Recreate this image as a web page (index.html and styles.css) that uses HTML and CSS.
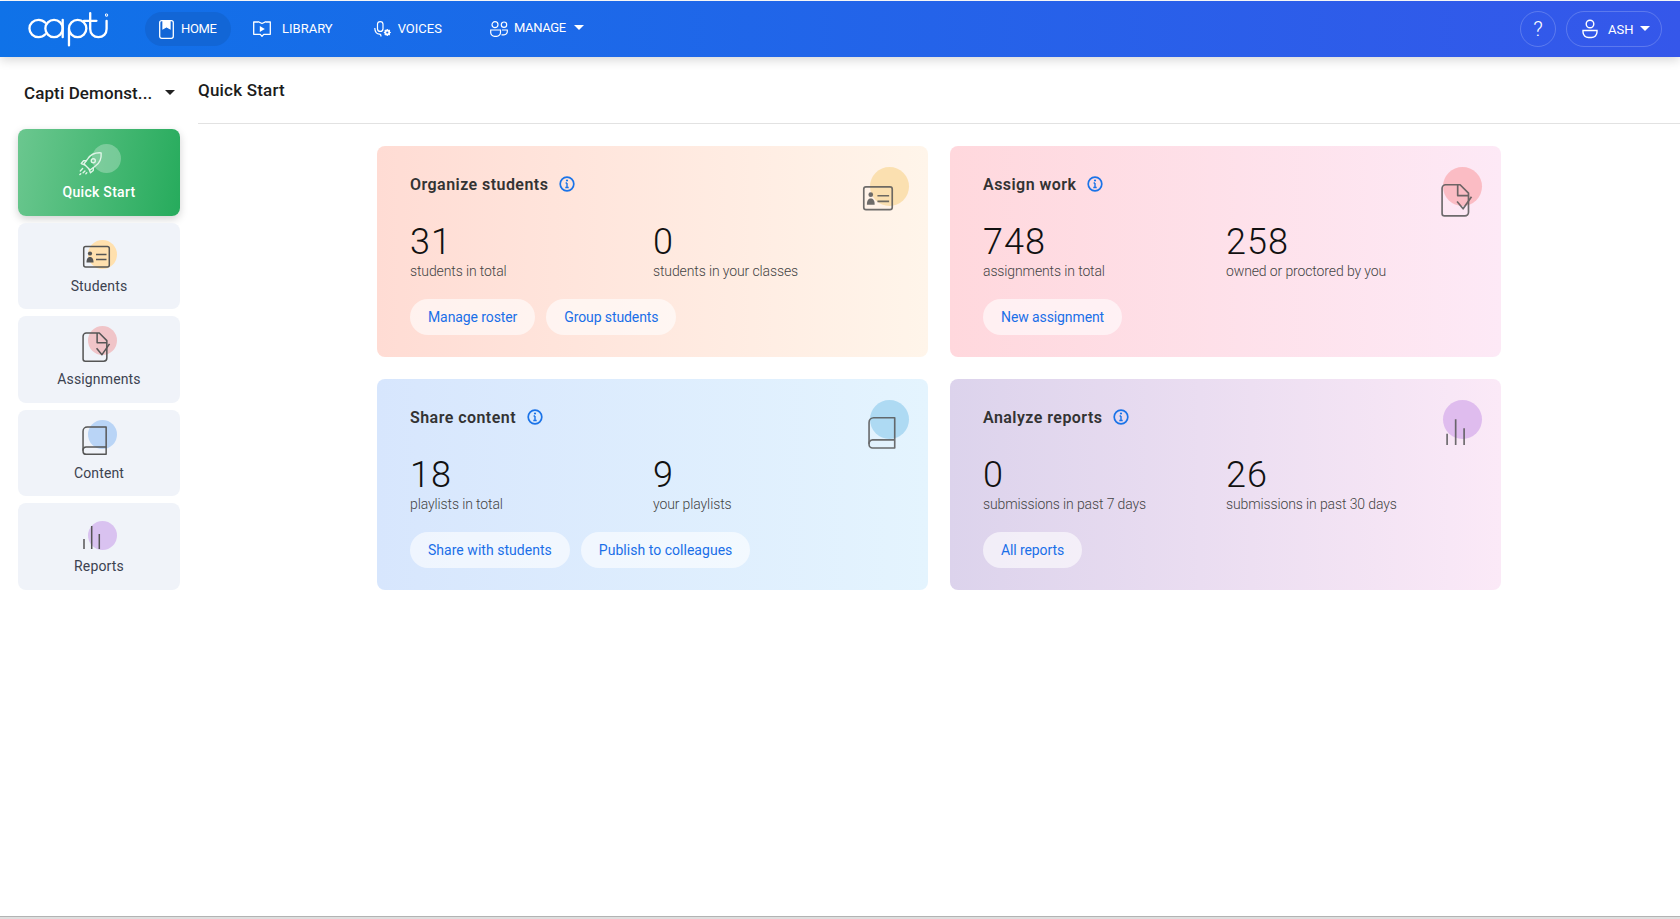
FILE: index.html
```html
<!DOCTYPE html>
<html lang="en">
<head>
<meta charset="utf-8">
<title>Capti - Quick Start</title>
<link rel="stylesheet" href="styles.css">
</head>
<body>
<div class="page">
  <header class="topbar">
    <svg class="logo" viewBox="0 0 84 36" fill="none" stroke="#fff" stroke-width="2.4" stroke-linecap="round">
      <path d="M18 11.500C16 9.500 13.500 8.500 11 8.500 5.500 8.500 1.500 12.500 1.500 17.500s4 9 9.500 9c2.500 0 5-1 7-3"/>
      <circle cx="27" cy="17.500" r="9"/>
      <path d="M36 8.500V26.500"/>
      <path d="M42.500 17.500a9 9 0 1 1 9 9 9 9 0 0 1-9-9zM42.500 17.500V35"/>
      <path d="M64.500 1.500V18c0 5 3.500 8.500 8.500 8.500s8.500-3.500 8.500-8.500V9.500M58 9.500H71"/>
      <circle cx="81.500" cy="3.500" r=".5"/>
    </svg>
    <nav class="mainnav">
      <a class="navitem navitem-active">
        <svg class="icon-home" viewBox="0 0 15 19" fill="none" stroke="#fff" stroke-width="1.300"><rect x=".7" y=".7" width="13.600" height="17.600" rx="2"/><path d="M4 .7h7v8L7.500 6.700 4 8.700z" fill="#fff"/></svg>
        <span class="text-tight">HOME</span>
      </a>
      <a class="navitem navitem-library">
        <svg class="icon-nav" viewBox="0 0 18 16" fill="none" stroke="#fff" stroke-width="1.300" stroke-linejoin="round"><path d="M5 1H.7V13.300H7.300L9 15.300l1.700-2H17.300V1H13"/><path d="M5 .7L9 2.500 13 .7"/><path d="M6.800 5l5 3-5 3z" fill="#fff" stroke="none"/></svg>
        <span>LIBRARY</span>
      </a>
      <a class="navitem navitem-voices">
        <svg class="icon-nav" viewBox="0 0 18 16" fill="none" stroke="#fff" stroke-width="1.200"><rect x="3.500" y=".6" width="5.500" height="9.800" rx="2.750"/><path d="M.8 7c0 4 2 6.200 4.700 6.200 1 0 1.500.8 1.500 2.200"/><circle cx="13.300" cy="11.500" r="2.900" fill="#fff" stroke="none"/><path d="M13.300 8v7M9.800 11.500h7M10.800 9l5 5M15.800 9l-5 5" stroke="#fff" stroke-width="1.100"/><circle cx="13.300" cy="11.500" r="1.100" fill="#1a6ae9" stroke="none"/></svg>
        <span>VOICES</span>
      </a>
      <a class="navitem navitem-manage">
        <svg class="icon-nav" viewBox="0 0 18 16" fill="none" stroke="#fff" stroke-width="1.200"><circle cx="5" cy="3.700" r="3"/><circle cx="14" cy="3.700" r="2.700"/><path d="M.7 9h9.800v2.500a3.800 3.800 0 0 1-3.800 3.800H4.500a3.800 3.800 0 0 1-3.800-3.800z"/><path d="M12 9h5.300v1.500a3.300 3.300 0 0 1-3.300 3.300h-2.500"/></svg>
        <span class="text-tight">MANAGE</span>
        <i class="caret caret-white caret-nav"></i>
      </a>
    </nav>
    <div class="topright">
      <a class="helpbtn">?</a>
      <a class="userbtn">
        <svg class="usericon" viewBox="0 0 16 20" fill="none" stroke="#fff" stroke-width="1.400"><circle cx="8" cy="5" r="3.800"/><path d="M1 11.500h14v1.500a5.500 5.500 0 0 1-5.500 5.500h-3A5.500 5.500 0 0 1 1 13z"/></svg>
        <span>ASH</span>
        <i class="caret caret-white caret-user"></i>
      </a>
    </div>
  </header>

  <div class="body">
    <aside class="sidebar">
      <div class="orgselect"><span>Capti Demonst...</span><i class="caret caret-dark"></i></div>
      <ul class="sidelist">
        <li class="sideitem sideitem-active">
          <span class="sideicon">
            <i class="blob blob-quick"></i>
            <svg class="glyph glyph-rocket" viewBox="0 0 27 27" fill="none" stroke="#dff5e7" stroke-width="1.500" stroke-linejoin="round" stroke-linecap="round"><path d="M25 2C19 1.500 13.500 4 10.500 8.500L6.500 14l6.500 6.500 5.500-4C23 13.500 25.500 8 25 2z"/><circle cx="16.500" cy="10.500" r="2.200"/><path d="M9 10.500H6L3.500 13.500 7 15M16.500 18v3l-3 2.500-1.500-3.500M5 19l-2.500 2.500M7.500 21.500l-2 2M3 24.500l-1 1M9.500 23.500l-1 1"/></svg>
          </span>
          <span class="sidelabel">Quick Start</span>
        </li>
        <li class="sideitem">
          <span class="sideicon">
            <i class="blob blob-students"></i>
            <svg class="glyph" viewBox="0 0 27 27"><use href="#i-card"/></svg>
          </span>
          <span class="sidelabel">Students</span>
        </li>
        <li class="sideitem">
          <span class="sideicon">
            <i class="blob blob-assign"></i>
            <svg class="glyph" viewBox="0 0 27 27"><use href="#i-doc"/></svg>
          </span>
          <span class="sidelabel">Assignments</span>
        </li>
        <li class="sideitem">
          <span class="sideicon">
            <i class="blob blob-content"></i>
            <svg class="glyph" viewBox="0 0 27 27"><use href="#i-book"/></svg>
          </span>
          <span class="sidelabel">Content</span>
        </li>
        <li class="sideitem">
          <span class="sideicon">
            <i class="blob blob-reports"></i>
            <svg class="glyph" viewBox="0 0 27 27"><use href="#i-bars"/></svg>
          </span>
          <span class="sidelabel">Reports</span>
        </li>
      </ul>
    </aside>

    <main class="content">
      <h1 class="pagetitle">Quick Start</h1>
      <section class="cards">
        <article class="card card-organize">
          <div class="cardhead">
            <h2>Organize students</h2>
            <svg class="info" viewBox="0 0 16 16"><use href="#i-info"/></svg>
          </div>
          <div class="stats">
            <div class="stat"><b>31</b><span>students in total</span></div>
            <div class="stat"><b>0</b><span>students in your classes</span></div>
          </div>
          <div class="actions"><a class="pill">Manage roster</a><a class="pill">Group students</a></div>
          <i class="blob blob-big blob-b1"></i>
          <svg class="cardglyph cardglyph-card" viewBox="0 0 27 27"><use href="#i-card"/></svg>
        </article>
        <article class="card card-assign">
          <div class="cardhead">
            <h2>Assign work</h2>
            <svg class="info" viewBox="0 0 16 16"><use href="#i-info"/></svg>
          </div>
          <div class="stats">
            <div class="stat"><b>748</b><span>assignments in total</span></div>
            <div class="stat"><b>258</b><span>owned or proctored by you</span></div>
          </div>
          <div class="actions"><a class="pill">New assignment</a></div>
          <i class="blob blob-big blob-b2"></i>
          <svg class="cardglyph cardglyph-doc" viewBox="0 0 27 27"><use href="#i-doc"/></svg>
        </article>
        <article class="card card-share">
          <div class="cardhead">
            <h2>Share content</h2>
            <svg class="info" viewBox="0 0 16 16"><use href="#i-info"/></svg>
          </div>
          <div class="stats">
            <div class="stat"><b>18</b><span>playlists in total</span></div>
            <div class="stat"><b>9</b><span>your playlists</span></div>
          </div>
          <div class="actions"><a class="pill">Share with students</a><a class="pill">Publish to colleagues</a></div>
          <i class="blob blob-big blob-b3"></i>
          <svg class="cardglyph cardglyph-book" viewBox="0 0 27 27"><use href="#i-book"/></svg>
        </article>
        <article class="card card-analyze">
          <div class="cardhead">
            <h2>Analyze reports</h2>
            <svg class="info" viewBox="0 0 16 16"><use href="#i-info"/></svg>
          </div>
          <div class="stats">
            <div class="stat"><b>0</b><span>submissions in past 7 days</span></div>
            <div class="stat"><b>26</b><span>submissions in past 30 days</span></div>
          </div>
          <div class="actions"><a class="pill">All reports</a></div>
          <i class="blob blob-big blob-b4"></i>
          <svg class="cardglyph cardglyph-bars" viewBox="0 0 27 27"><use href="#i-bars"/></svg>
        </article>
      </section>
    </main>
  </div>
  <div class="bottomline"></div>
</div>

<svg class="defs" aria-hidden="true">
  <defs>
    <g id="i-card" fill="none" stroke="#555" stroke-width="1.500">
      <rect x="0.700" y="3.500" width="25.600" height="20.500" rx="2"/>
      <circle cx="7" cy="10.500" r="2.100" fill="#555" stroke="none"/>
      <path d="M3.500 19.500c0-4 1.500-5.500 3.500-5.500s3.500 1.500 3.500 5.500z" fill="#555" stroke="none"/>
      <path d="M13 11.500H23.500M13 16.500H23.500"/>
    </g>
    <g id="i-doc" fill="none" stroke="#555" stroke-width="1.400" stroke-linejoin="round" transform="translate(-1 -4) scale(1.08)">
      <path d="M16 1H4a3 3 0 0 0-3 3V25a2 2 0 0 0 2 2H20a3 3 0 0 0 3-3V8z"/>
      <path d="M14 1V10H23"/>
      <path d="M13.500 15l5 6 7-10"/>
    </g>
    <g id="i-book" fill="none" stroke="#555" stroke-width="1.400" stroke-linejoin="round" transform="translate(-1 -4) scale(1.05)">
      <path d="M23 1H5a4 4 0 0 0-4 4V24a3 3 0 0 0 3 3H23z"/>
      <path d="M23 20H4a3 3 0 0 0-3 3.500"/>
    </g>
    <g id="i-bars" stroke="#555" stroke-width="1.500" fill="none">
      <path d="M1 26V16M8.700 26V3M16.300 26V11"/>
    </g>
    <g id="i-info" fill="none" stroke="#1a73e8" stroke-width="1.700">
      <circle cx="8" cy="8" r="6.800"/>
      <path d="M8 7v4.500M6.300 11.500h3.400M6.600 7H8" stroke-width="1.400"/>
      <circle cx="8" cy="4.500" r="1.100" fill="#1a73e8" stroke="none"/>
    </g>
  </defs>
</svg>
</body>
</html>
```

FILE: styles.css
```css
* { box-sizing: border-box; }
html, body { margin: 0; height: 100%; }
body {
  font-family: Roboto, "Liberation Sans", sans-serif;
  color: #222;
  background: #fff;
}
a { text-decoration: none; }
ul { list-style: none; margin: 0; padding: 0; }
h1, h2 { margin: 0; }

.page { height: 100vh; display: flex; flex-direction: column; overflow: hidden; }
.defs { width: 0; height: 0; position: absolute; }

/* top bar */
.topbar {
  flex: none;
  margin-top: 1px;
  height: 56px;
  display: flex;
  align-items: center;
  padding: 0 18px 0 28px;
  background: linear-gradient(90deg, #0f72e8 0%, #3557ea 100%);
  box-shadow: 0 3px 10px rgba(0, 0, 0, .16);
  color: #fff;
  position: relative;
  z-index: 2;
}
.logo { width: 81px; height: 36px; flex: none; }
.mainnav { display: flex; align-items: center; margin-left: 36px; }
.navitem {
  display: flex; align-items: center;
  height: 34px;
  color: #fff;
  font-size: 13px;
}
.navitem span { padding-bottom: 2px; }
.text-tight { letter-spacing: -.35px; }
.navitem-active {
  width: 86px; padding-left: 14px; gap: 7px;
  border-radius: 17px;
  background: #1266d6;
}
.navitem-library { margin-left: 22px; gap: 11px; }
.navitem-voices { margin-left: 41px; gap: 6px; }
.navitem-manage { margin-left: 48px; gap: 6px; }
.navitem-manage span { padding-bottom: 3px; }
.icon-home { width: 15px; height: 19px; flex: none; }
.icon-nav { width: 18px; height: 16px; flex: none; }
.caret {
  display: inline-block; width: 0; height: 0;
  border-left: 5px solid transparent;
  border-right: 5px solid transparent;
}
.caret-white { border-top: 5px solid #fff; }
.caret-dark { border-top: 5px solid #222; }
.caret-nav { margin-left: 2px; margin-bottom: 3px; }
.caret-user { margin-left: -3px; margin-top: -2px; }

.topright { margin-left: auto; display: flex; align-items: center; gap: 10px; }
.helpbtn {
  width: 36px; height: 36px;
  border-radius: 50%;
  border: 1px solid rgba(255, 255, 255, .2);
  display: flex; align-items: center; justify-content: center;
  color: #fff; font-size: 21px; font-weight: 300;
}
.userbtn {
  width: 96px; height: 36px;
  border-radius: 18px;
  border: 1px solid rgba(255, 255, 255, .2);
  display: flex; align-items: center; gap: 10px;
  padding-left: 15px;
  color: #fff; font-size: 13px;
}
.usericon { width: 16px; height: 20px; flex: none; }

/* body */
.body { flex: 1; display: flex; min-height: 0; }
.sidebar { flex: none; width: 198px; padding: 0 18px; }
.orgselect {
  height: 72px;
  display: flex; align-items: center; gap: 13px;
  padding: 0 0 1px 6px;
  font-size: 17px; font-weight: 500;
  letter-spacing: .1px;
  color: #1c1c1c;
  white-space: nowrap;
}
.sidelist { display: flex; flex-direction: column; gap: 7.100px; }
.sideitem {
  height: 86.500px;
  border-radius: 8px;
  background: #f0f3f9;
  display: flex; flex-direction: column; align-items: center;
  padding-top: 20px;
}
.sideitem-active {
  background: linear-gradient(100deg, #6bc78f 0%, #26ab5c 100%);
  box-shadow: 0 3px 8px rgba(0, 0, 0, .18);
  color: #fff;
}
.sideicon { position: relative; width: 27px; height: 27px; display: block; margin-left: -5px; }
.glyph { position: relative; display: block; width: 27px; height: 27px; overflow: visible; }
.glyph-rocket { width: 25px; height: 25px; margin: 2px 0 0 -5px; }
.sidelabel {
  margin-top: 8px;
  font-size: 14px;
  letter-spacing: .15px;
  color: #3c4250;
}
.sideitem-active .sidelabel { color: #fff; font-weight: 500; letter-spacing: .3px; }

.blob { position: absolute; border-radius: 50%; width: 29px; height: 29px; left: 5px; }
.blob-quick { background: rgba(255, 255, 255, .28); left: 9px; top: -5px; }
.blob-students { background: #ffe0ae; top: -3px; }
.blob-assign { background: #f0c4c8; top: -10px; }
.blob-content { background: #b9d4f6; top: -10px; }
.blob-reports { background: #d9c2f0; top: -2px; }

/* content */
.content { flex: 1; min-width: 0; }
.pagetitle {
  height: 67px;
  padding: 23px 0 0 0;
  border-bottom: 1px solid #e2e2e2;
  font-size: 17px; font-weight: 500;
  letter-spacing: .2px;
  color: #1c1c1c;
}
.cards {
  width: 1124px;
  margin: 22px auto 0;
  display: grid;
  grid-template-columns: 551px 551px;
  grid-auto-rows: 211px;
  gap: 22px;
}
.card {
  position: relative;
  border-radius: 8px;
  padding: 29px 33px 0;
}
.card-organize { background: linear-gradient(90deg, #ffdcd4 0%, #fff5ea 100%); }
.card-assign { background: linear-gradient(90deg, #ffd8dd 0%, #fde9f6 100%); }
.card-share { background: linear-gradient(90deg, #d7e6fd 0%, #e4f4fe 100%); }
.card-analyze { background: linear-gradient(90deg, #dcd3ec 0%, #fbe9f7 100%); }

.cardhead { display: flex; align-items: center; gap: 11px; height: 18px; }
.cardhead h2 {
  font-size: 16px; font-weight: 600;
  letter-spacing: .45px;
  color: #333;
}
.info { width: 16px; height: 16px; }
.stats { display: grid; grid-template-columns: 243px 1fr; margin-top: 31px; }
.stat { display: flex; flex-direction: column; }
.stat b {
  font-size: 36px; font-weight: 300;
  line-height: 37px;
  letter-spacing: 1px;
  color: #111;
}
.stat span {
  font-size: 14px; font-weight: 300;
  line-height: 20px;
  color: #444;
  letter-spacing: -.12px;
}
.actions { display: flex; gap: 11px; margin-top: 18px; }
.pill {
  height: 36px;
  padding: 0 18px;
  border-radius: 18px;
  background: rgba(255, 255, 255, .6);
  display: flex; align-items: center;
  font-size: 14px;
  letter-spacing: -.1px;
  color: #1a6fe8;
}
.card-share .pill { letter-spacing: .03px; }
.blob-big { width: 39px; height: 39px; left: 493px; top: 20.500px; }
.blob-b1 { background: #fbe0b0; }
.blob-b2 { background: #fbbcc4; }
.blob-b3 { background: #aedaf3; }
.blob-b4 { background: #dfbcee; }
.cardglyph { position: absolute; width: 30px; height: 30px; overflow: visible; opacity: .85; }
.cardglyph-card { left: 485.500px; top: 37px; }
.cardglyph-doc { left: 492px; top: 42px; }
.cardglyph-book { left: 491.500px; top: 42px; }
.cardglyph-bars { left: 496px; top: 37px; }

.bottomline {
  flex: none; height: 3px;
  background: #dedede;
  border-top: 1px solid #b3b3b3;
}
```
